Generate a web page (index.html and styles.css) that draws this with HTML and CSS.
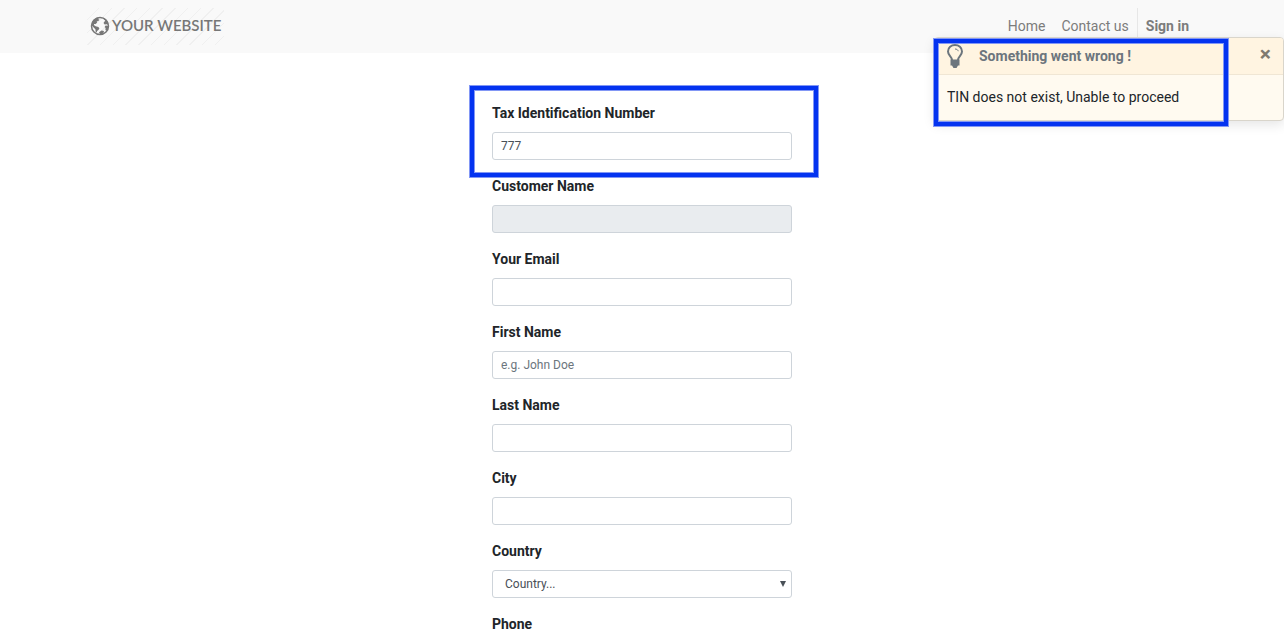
FILE: index.html
```
<!DOCTYPE html>
<html lang="en">
<head>
<meta charset="utf-8">
<title>Your Website</title>
<link rel="stylesheet" href="styles.css">
</head>
<body>
<header class="navbar">
  <div class="container">
    <a class="logo" href="#">
      <svg class="globe" viewBox="0 0 20 20" aria-hidden="true">
        <circle cx="10" cy="10" r="8.500" fill="none" stroke="#777" stroke-width="1.500"/>
        <path fill="#777" d="M9.500 1.300 8 3l1.500.8-1.200 1.200-1.600.6.400 1-1.500 1.300-1.600.2.100 1.200 1.500 1 2.800.8 1 1.500-1 1.400-1.300 1-.4 1.600-1-.6-.3-2.800-1.800-1.800L1.500 9C2 5.400 4.800 1.700 9.500 1.300z"/>
        <path fill="#777" d="M13 1.800c3.300 1 5.300 3.800 5.600 7l-2-.6-1.900.3-1.200-1.500 1-1.500.9-.8-1.400-1.200z"/>
        <path fill="#777" d="M15.600 9.600l3 .4c-.3 2-1 3.600-2.200 4.800l-1-.9.2-1.800-1-1.200z"/>
        <path fill="#777" d="M9 16.200l2.500-1.800 2.500.6-.6 2.600-3 1.100z"/>
      </svg>
      <span>YOUR WEBSITE</span>
    </a>
    <nav class="menu">
      <a href="#">Home</a>
      <a href="#">Contact us</a>
      <a class="signin" href="#">Sign in</a>
    </nav>
  </div>
</header>

<main>
  <form class="form">
    <div class="field marked">
      <label for="tin">Tax Identification Number</label>
      <input id="tin" type="text" value="777">
      <span class="frame"></span>
    </div>
    <div class="field">
      <label for="customer">Customer Name</label>
      <input id="customer" type="text" readonly>
    </div>
    <div class="field">
      <label for="email">Your Email</label>
      <input id="email" type="email">
    </div>
    <div class="field">
      <label for="first">First Name</label>
      <input id="first" type="text" placeholder="e.g. John Doe">
    </div>
    <div class="field">
      <label for="last">Last Name</label>
      <input id="last" type="text">
    </div>
    <div class="field">
      <label for="city">City</label>
      <input id="city" type="text">
    </div>
    <div class="field">
      <label for="country">Country</label>
      <div class="select">
        <select id="country"><option>Country...</option></select>
        <svg class="arrow" viewBox="0 0 6 6" aria-hidden="true"><path fill="#495057" d="M0 0h6L3 6z"/></svg>
      </div>
    </div>
    <div class="field">
      <label for="phone">Phone</label>
      <input id="phone" type="tel">
    </div>
  </form>
</main>

<aside class="toast" role="alert">
  <div class="toast-header">
    <svg class="bulb" viewBox="0 0 16 24" aria-hidden="true">
      <path fill="none" stroke="#6c757d" stroke-width="2" d="M5 16C5 12.500 1 11.500 1 7.500 1 3.500 4.200 1 8 1s7 2.500 7 6.500c0 4-4 5-4 8.500"/>
      <path fill="#6c757d" d="M3.500 15.500h9v6H11L9.500 24h-3L5 21.500H3.500z"/>
      <path fill="none" stroke="#6c757d" d="M8 5c1.700 0 3 .8 3.200 2.200"/>
    </svg>
    <strong>Something went wrong !</strong>
    <button class="close" type="button" aria-label="Close">×</button>
  </div>
  <div class="toast-body">TIN does not exist, Unable to proceed</div>
  <span class="frame"></span>
</aside>
</body>
</html>
```
FILE: styles.css
```
* {
  box-sizing: border-box;
}

body {
  margin: 0;
  font-family: Roboto, "Liberation Sans", sans-serif;
  font-size: 14px;
  line-height: 21px;
  color: #212529;
  background: #fff;
}

.navbar {
  padding: 8px 0;
  background: #f9f9f9;
}

.container {
  display: flex;
  justify-content: space-between;
  max-width: 1140px;
  margin: 0 auto;
  padding: 0 15px;
}

.logo {
  display: flex;
  align-items: center;
  gap: 2px;
  padding: 0 3px 2px;
  font-family: Lato, sans-serif;
  font-size: 15px;
  font-weight: 600;
  color: #777;
  text-decoration: none;
  background: repeating-linear-gradient(135deg, #f9f9f9 0 8px, #f0f0f0 8px 9px);
}

.globe {
  width: 20px;
  height: 20px;
}

.menu {
  display: flex;
}

.menu a {
  padding: 8px;
  color: #7c7c7c;
  text-decoration: none;
}

.menu .signin {
  border-left: 1px solid #e7e7e7;
  font-weight: 700;
}

.form {
  width: 300px;
  margin: 50px auto 0;
}

.field {
  display: flex;
  flex-direction: column;
  gap: 8px;
  margin-bottom: 16px;
}

.marked {
  position: relative;
}

label {
  font-weight: 700;
}

input,
select {
  width: 100%;
  height: 28px;
  padding: 4px 8px;
  border: 1px solid #ced4da;
  border-radius: 3px;
  font-family: inherit;
  font-size: 12px;
  line-height: 18px;
  color: #495057;
  background: #fff;
}

input:read-only {
  background: #e9ecef;
}

input::placeholder {
  color: #6c757d;
}

.select {
  display: grid;
  align-items: center;
}

.select > * {
  grid-area: 1 / 1;
}

select {
  appearance: none;
  padding-left: 12px;
}

.arrow {
  justify-self: end;
  width: 6px;
  height: 6px;
  margin-right: 6px;
  pointer-events: none;
}

.toast {
  position: absolute;
  top: 37px;
  right: 0;
  width: 350px;
  border: 1px solid #d9d5cb;
  border-radius: 4px;
  background: #fffaf0;
  box-shadow: 0 4px 12px rgba(0, 0, 0, 0.1);
}

.toast-header {
  display: flex;
  align-items: center;
  height: 37px;
  padding: 0 12px;
  border-bottom: 1px solid #f0e6d4;
  border-radius: 3px 3px 0 0;
  color: #6c757d;
  background: #fff4e1;
}

.bulb {
  width: 16px;
  height: 24px;
  margin-right: 16px;
}

.close {
  margin-left: auto;
  padding: 0 0 4px;
  border: 0;
  font-family: inherit;
  font-size: 21px;
  font-weight: 700;
  line-height: 21px;
  color: #7f7a70;
  background: none;
}

.toast-body {
  padding: 12px;
}

.frame {
  position: absolute;
  border: 4px solid #0433f0;
  box-shadow: 0 0 0 1px #8297f5, inset 0 0 0 1px #8297f5;
  pointer-events: none;
}

.marked .frame {
  inset: -17px -26px -17px -22px;
}

.toast .frame {
  inset: 1px 55px -6px -1px;
}
```
